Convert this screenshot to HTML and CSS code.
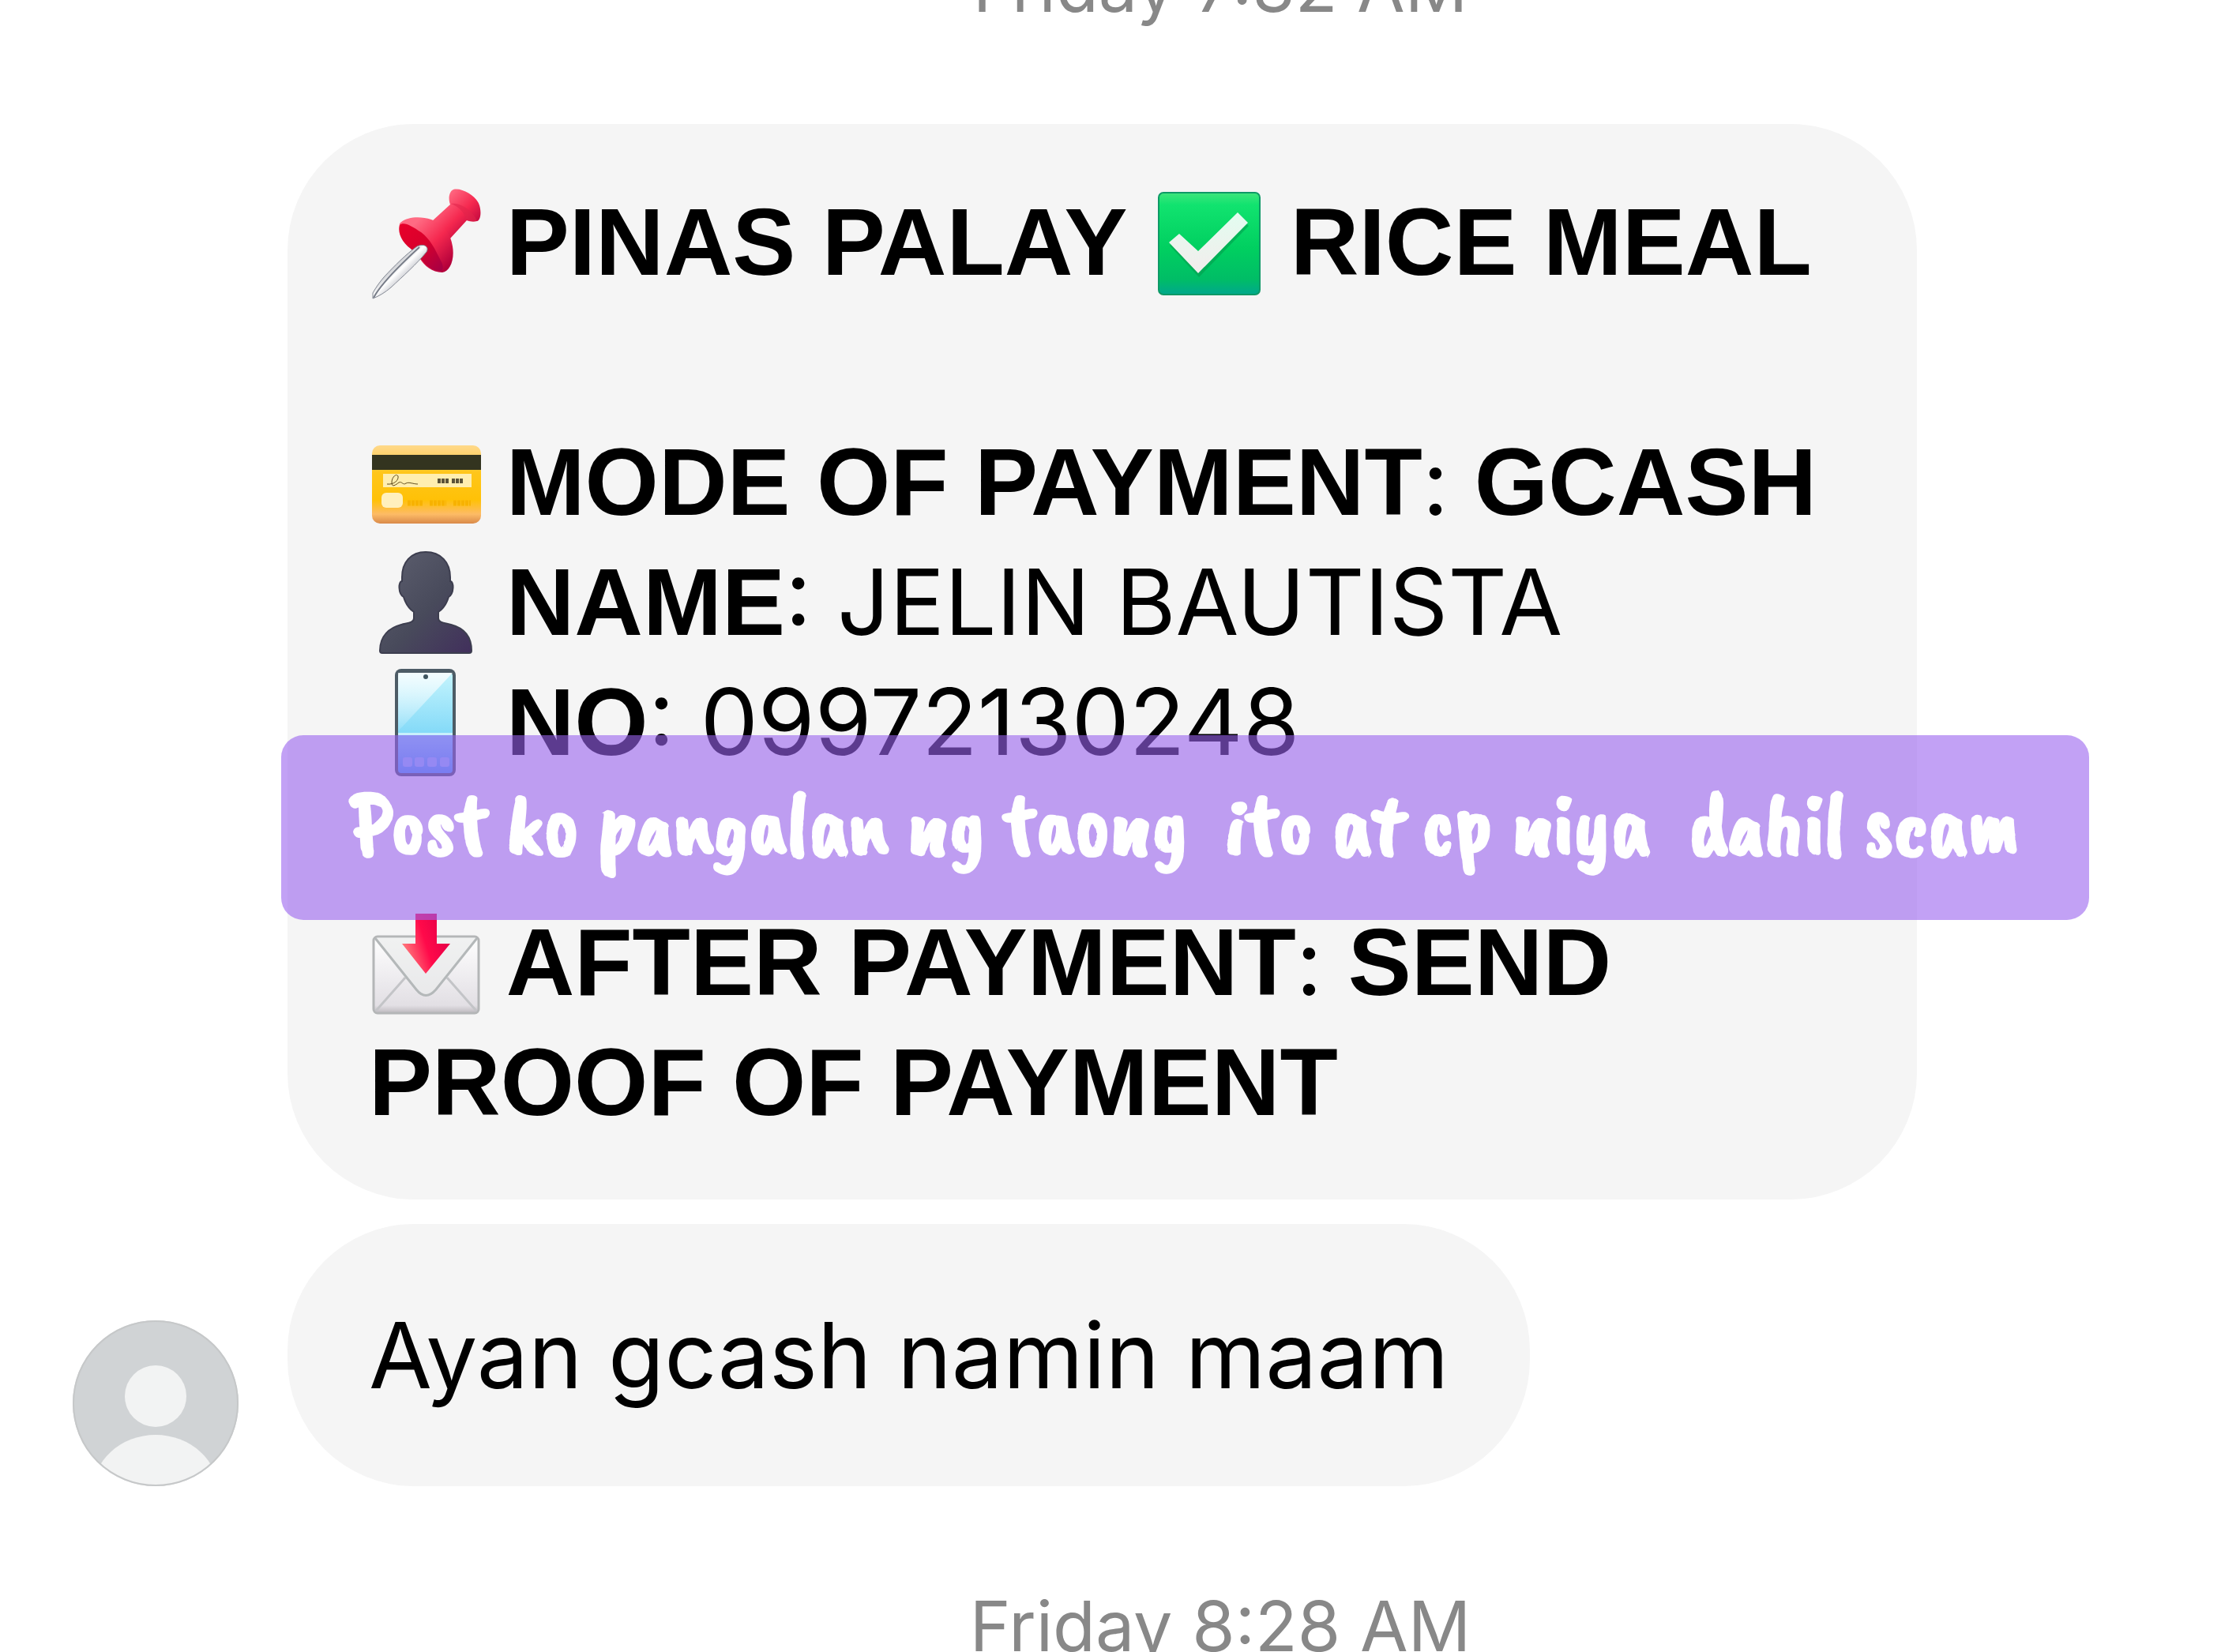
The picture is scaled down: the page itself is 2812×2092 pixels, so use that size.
FILE: index.html
```
<!DOCTYPE html>
<html lang="en">
<head>
  <meta charset="UTF-8">
  <meta name="viewport" content="width=device-width, initial-scale=1.0">
  <title>Messages</title>
  <link rel="stylesheet" href="styles.css">
</head>
<body>
  <main class="chat">
    <time class="time">Friday 7:32 AM</time>

    <div class="messages">
      <div class="bubble bubble-long">
        <p>
          <!-- Pushpin -->
          <svg class="emoji" viewBox="0 0 144 144" role="img" aria-label="Pushpin">
            <defs>
              <linearGradient id="pin-needle" x1="0" y1="0" x2="1" y2="1">
                <stop offset="0.3" stop-color="#8d919b"/>
                <stop offset="0.48" stop-color="#ffffff"/>
                <stop offset="0.7" stop-color="#9a9da8"/>
              </linearGradient>
              <linearGradient id="pin-body" x1="0" y1="0" x2="1" y2="1">
                <stop offset="0.2" stop-color="#ff6b83"/>
                <stop offset="0.55" stop-color="#f5284f"/>
                <stop offset="0.9" stop-color="#b3003a"/>
              </linearGradient>
              <linearGradient id="pin-under" x1="0" y1="0" x2="1" y2="1">
                <stop offset="0" stop-color="#e8002a"/>
                <stop offset="0.5" stop-color="#d8002c"/>
                <stop offset="1" stop-color="#a30045"/>
              </linearGradient>
            </defs>
            <path fill="url(#pin-body)" d="M80 44 L103 23 C100 15 102 6 107 4 C118 1 137 13 140 24 C143 34 141 43 137 44 C132 45 127 44 124 43 L103 66 Z"/>
            <path fill="#e0244b" opacity="0.55" d="M124 43 C121 34 115 26 104 22 C116 20 132 31 137 44 C132 45 128 45 124 43Z"/>
            <path fill="url(#pin-body)" d="M39 47 C46 39 64 37 79 42 C96 48 104 62 106 76 C109 94 102 108 93 109 C80 109 70 100 65 92 L58 80 C46 74 37 60 39 47Z"/>
            <path fill="url(#pin-under)" d="M39 49 C44 44 54 50 66 58 C78 67 84 80 90 92 C94 99 95 104 92 107 C82 108 72 101 66 92 L53 79 C42 71 36 59 39 49Z"/>
            <path fill="url(#pin-needle)" stroke="#858a95" stroke-width="1" d="M5 142 L5 135 C9 128 13 122 19 115 C33 100 47 86 61 76 C69 72 77 76 73 83 C61 98 43 114 28 128 C21 134 13 139 5 142Z"/>
            <path fill="none" stroke="#777c88" stroke-width="2" d="M6 141 C15 124 40 99 64 77"/>
          </svg>
          <strong>PINAS PALAY</strong>
          <!-- Check mark button -->
          <svg class="emoji" viewBox="0 0 144 144" role="img" aria-label="Check mark">
            <defs>
              <linearGradient id="check-box" x1="0" y1="0" x2="0" y2="1">
                <stop offset="0" stop-color="#3fe57c"/>
                <stop offset="0.12" stop-color="#11e36f"/>
                <stop offset="0.55" stop-color="#00cf60"/>
                <stop offset="0.85" stop-color="#00bd66"/>
                <stop offset="1" stop-color="#00a88d"/>
              </linearGradient>
              <linearGradient id="check-tick" x1="0" y1="0" x2="0" y2="1">
                <stop offset="0" stop-color="#e2fdf0"/>
                <stop offset="1" stop-color="#f3ecec"/>
              </linearGradient>
            </defs>
            <rect x="7" y="8" width="128" height="129" rx="6" fill="url(#check-box)" stroke="#0e9966" stroke-width="2"/>
            <path fill="#009a4c" opacity="0.55" d="M21 75 L34 64 L58 86 L108 37 L121 50 L58 115Z"/>
            <path fill="url(#check-tick)" d="M20 71 L33 60 L57 82 L107 33 L120 46 L57 110Z"/>
          </svg>
          <strong>RICE MEAL</strong>
        </p>
        <br>
        <p>
          <!-- Credit card -->
          <svg class="emoji" viewBox="0 0 144 144" role="img" aria-label="Credit card">
            <defs>
              <linearGradient id="card-face" x1="0" y1="0" x2="0" y2="1">
                <stop offset="0" stop-color="#ffd98a"/>
                <stop offset="0.12" stop-color="#ffd36f"/>
                <stop offset="0.35" stop-color="#ffc61a"/>
                <stop offset="0.7" stop-color="#ffc107"/>
                <stop offset="0.88" stop-color="#fdbb66"/>
                <stop offset="1" stop-color="#d98a4a"/>
              </linearGradient>
            </defs>
            <rect x="4" y="24" width="138" height="99" rx="10" fill="url(#card-face)"/>
            <rect x="4" y="36" width="138" height="19" fill="#33341f"/>
            <rect x="18" y="60" width="112" height="17" fill="#ffeeb0"/>
            <path fill="none" stroke="#5d4a1c" stroke-width="1" d="M23 73 C32 74 38 68 37 63 C35 59 29 64 29 71 C29 78 34 74 38 71 C42 69 43 75 47 72 C51 70 56 73 62 73"/>
            <path fill="none" stroke="#5b5238" stroke-width="6" stroke-dasharray="4 1" d="M87 69 H101 M105 69 H119"/>
            <rect x="16" y="84" width="27" height="19" rx="6" fill="#fff0bd"/>
            <path fill="none" stroke="#f7b200" stroke-width="7" stroke-dasharray="4 1" d="M49 97 H69 M77 97 H98 M107 97 H129"/>
          </svg>
          <strong>MODE OF PAYMENT</strong>: <strong>GCASH</strong>
        </p>
        <p>
          <!-- Bust in silhouette -->
          <svg class="emoji" viewBox="0 0 144 144" role="img" aria-label="Person">
            <defs>
              <linearGradient id="bust" x1="0" y1="0" x2="1" y2="1">
                <stop offset="0.1" stop-color="#5a5c6c"/>
                <stop offset="0.55" stop-color="#484a5b"/>
                <stop offset="1" stop-color="#412f5c"/>
              </linearGradient>
            </defs>
            <path fill="url(#bust)" stroke="#3d3e4f" stroke-width="2" d="M72 7 C91 7 103 20 103 39 L103 44 C108 44 108 60 101 64 C98 74 94 79 88 83 L88 91 C88 97 97 97 104 99 C119 103 130 113 130 132 Q130 135 127 135 L17 135 Q14 135 14 132 C14 113 26 103 41 99 C48 97 57 97 57 91 L57 83 C51 79 47 74 44 64 C37 60 37 44 42 44 L42 39 C42 20 53 7 72 7Z"/>
          </svg>
          <strong>NAME</strong>: JELIN BAUTISTA
        </p>
        <p>
          <!-- Mobile phone -->
          <svg class="emoji" viewBox="0 0 144 144" role="img" aria-label="Mobile phone">
            <defs>
              <linearGradient id="phone-screen" x1="0" y1="0" x2="0" y2="1">
                <stop offset="0" stop-color="#c4f4fd"/>
                <stop offset="0.6" stop-color="#84daf8"/>
                <stop offset="1" stop-color="#4aa5f5"/>
              </linearGradient>
              <linearGradient id="phone-glare" x1="0" y1="0" x2="0" y2="1">
                <stop offset="0" stop-color="#fff" stop-opacity="0.8"/>
                <stop offset="1" stop-color="#fff" stop-opacity="0.1"/>
              </linearGradient>
            </defs>
            <rect x="33" y="3" width="77" height="136" rx="8" fill="#4d5c66"/>
            <rect x="37" y="8" width="69" height="127" rx="4" fill="url(#phone-screen)"/>
            <path fill="url(#phone-glare)" d="M37 8 H106 L37 82Z"/>
            <rect x="37" y="84" width="69" height="3" fill="#c8f0fc"/>
            <circle cx="72" cy="13" r="3" fill="#3f5560"/>
            <g fill="#8fc2fa">
              <rect x="43" y="115" width="12" height="12" rx="3"/>
              <rect x="58" y="115" width="12" height="12" rx="3"/>
              <rect x="74" y="115" width="12" height="12" rx="3"/>
              <rect x="90" y="115" width="12" height="12" rx="3"/>
            </g>
          </svg>
          <strong>NO</strong>: 09972130248
        </p>
        <br>
        <p>
          <!-- Envelope with arrow -->
          <svg class="emoji" viewBox="0 0 144 144" role="img" aria-label="Envelope with arrow">
            <defs>
              <linearGradient id="mail-paper" x1="0" y1="0" x2="0" y2="1">
                <stop offset="0" stop-color="#ffffff"/>
                <stop offset="0.9" stop-color="#e2dfe4"/>
                <stop offset="1" stop-color="#bdb9be"/>
              </linearGradient>
              <linearGradient id="mail-arrow" x1="0" y1="1" x2="1" y2="0.6">
                <stop offset="0.2" stop-color="#ff7078"/>
                <stop offset="0.6" stop-color="#ff0a4a"/>
                <stop offset="1" stop-color="#e80048"/>
              </linearGradient>
            </defs>
            <rect x="6" y="38" width="133" height="97" rx="5" fill="url(#mail-paper)" stroke="#b4b6b7" stroke-width="3"/>
            <path fill="none" stroke="#c3c4c7" stroke-width="3" d="M9 132 L46 90 M136 132 L99 90"/>
            <path fill="#e9ebeb" fill-opacity="0.7" stroke="#b4b8b9" stroke-width="3" d="M8 40 L60 105 Q72 120 85 105 L137 40"/>
            <path fill="url(#mail-arrow)" d="M59 9 H86 V47 H103 L72 85 L42 47 H59Z"/>
          </svg>
          <strong>AFTER PAYMENT</strong>: <strong>SEND PROOF OF PAYMENT</strong>
        </p>
        <div class="caption">Post ko pangalan ng taong  ito at cp niya  dahil scam</div>
      </div>

      <svg class="avatar" viewBox="0 0 210 210" role="img" aria-label="Profile picture">
        <clipPath id="avatar-clip"><circle cx="105" cy="105" r="105"/></clipPath>
        <g clip-path="url(#avatar-clip)">
          <rect width="210" height="210" fill="#d0d3d5"/>
          <circle cx="105" cy="96" r="39" fill="#f2f3f3"/>
          <ellipse cx="105" cy="218" rx="80" ry="73" fill="#f2f3f3"/>
        </g>
        <circle cx="105" cy="105" r="104" fill="none" stroke="#c6c8c9" stroke-width="2"/>
      </svg>
      <div class="bubble">
        <p>Ayan gcash namin maam</p>
      </div>
    </div>

    <time class="time">Friday 8:28 AM</time>
  </main>
</body>
</html>
```

FILE: styles.css
```
body {
  margin: 0;
  background-color: #fff;
  color: #000;
  font-family: Inter, sans-serif;
}
.chat {
  height: 100vh;
  display: flex;
  flex-direction: column;
  overflow: hidden;
}
.time {
  flex: none;
  padding-left: 278px;
  color: #888;
  font-size: 88px;
  font-weight: 400;
  line-height: 104px;
  text-align: center;
}
/* scrolled a little past the first time stamp */
.time:first-child {
  margin-top: -69px;
}
.messages {
  flex: none;
  display: grid;
  grid-template-columns: 210px 1fr;
  gap: 31px 62px;
  justify-items: start;
  align-items: end;
  margin: 122px 0 125px;
  padding: 0 385px 0 92px;
}
.bubble {
  position: relative;
  grid-column: 2;
  padding: 90px 103px;
  border-radius: 160px;
  background-color: #f5f5f5;
  font-size: 116px;
  font-weight: 400;
  line-height: 152px;
}
.bubble-long {
  padding: 73px 103px;
}
.bubble p {
  margin: 0;
}
.bubble strong {
  font-family: "Liberation Sans", sans-serif;
  font-size: 120px;
  line-height: 120px;
}
.emoji {
  width: 144px;
  height: 144px;
  margin-right: -3px;
  vertical-align: -32px;
}
.avatar {
  grid-column: 1;
  width: 210px;
  height: 210px;
}
.caption {
  position: absolute;
  top: 774px;
  left: -8px;
  right: -218px;
  padding-bottom: 8px;
  border-radius: 28px;
  background-color: rgba(153, 99, 239, 0.6);
  color: #fff;
  font-family: "Caveat Brush", Lato, sans-serif;
  font-size: 113px;
  font-weight: 700;
  line-height: 226px;
  text-align: center;
  white-space: pre;
}
```
